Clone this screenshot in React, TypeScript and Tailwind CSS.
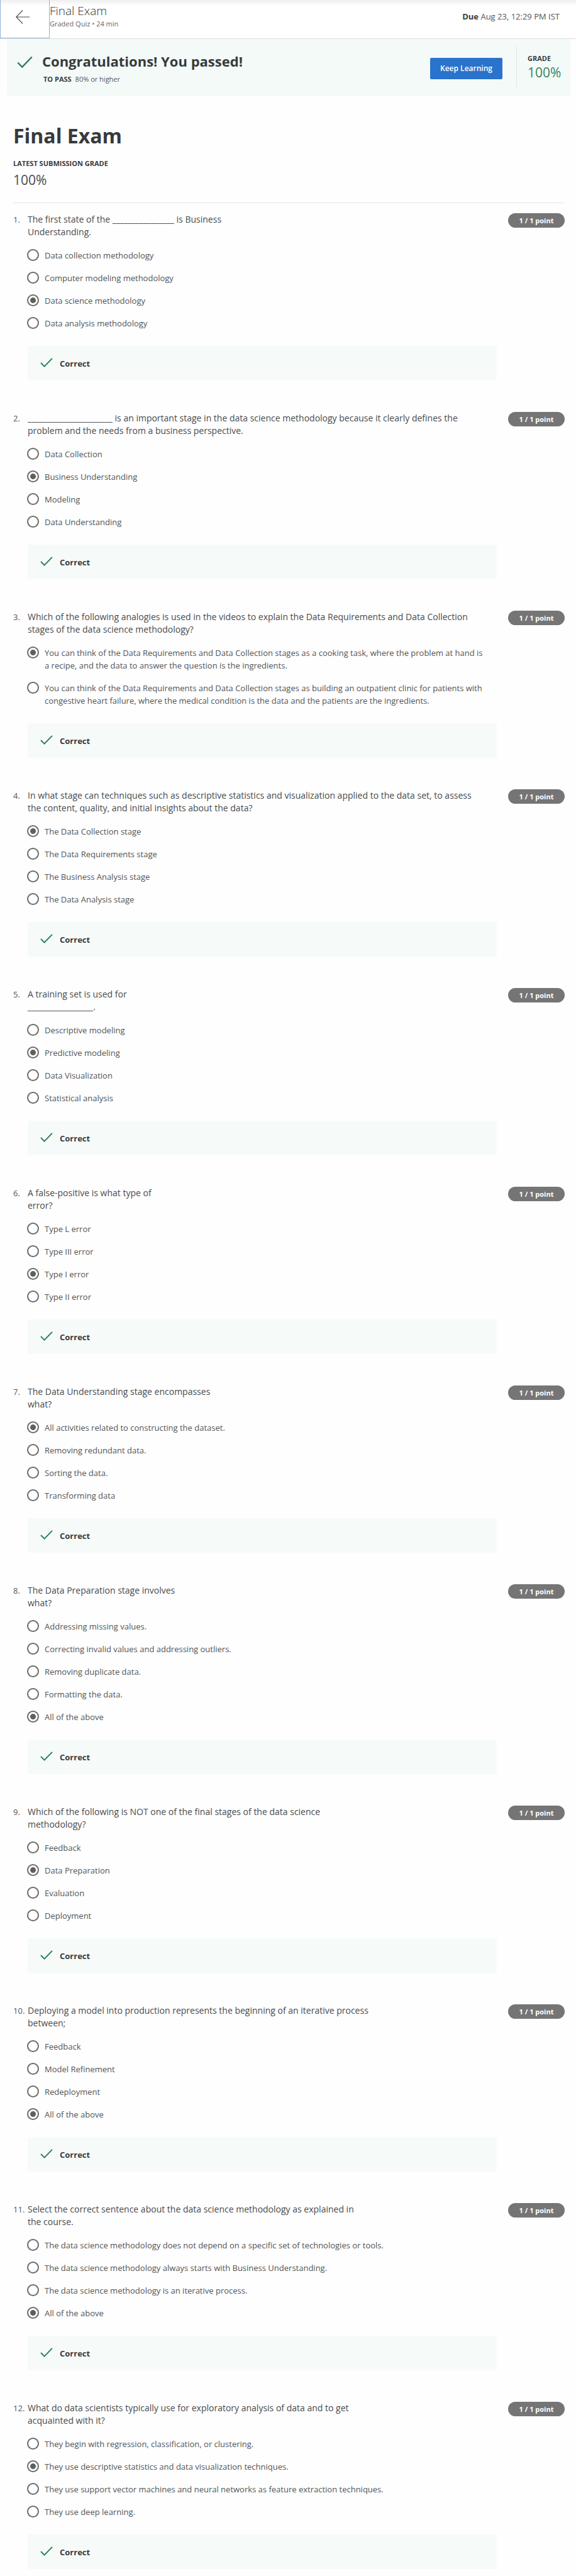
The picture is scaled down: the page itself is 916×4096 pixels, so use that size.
interface Question {
  prompt: string;
  options: string[];
  selected: number;
}

const questions: Question[] = [
  {
    prompt: 'The first state of the ________________ is Business\nUnderstanding.',
    options: [
      'Data collection methodology',
      'Computer modeling methodology',
      'Data science methodology',
      'Data analysis methodology',
    ],
    selected: 2,
  },
  {
    prompt:
      '______________________ is an important stage in the data science methodology because it clearly defines the\nproblem and the needs from a business perspective.',
    options: ['Data Collection', 'Business Understanding', 'Modeling', 'Data Understanding'],
    selected: 1,
  },
  {
    prompt:
      'Which of the following analogies is used in the videos to explain the Data Requirements and Data Collection\nstages of the data science methodology?',
    options: [
      'You can think of the Data Requirements and Data Collection stages as a cooking task, where the problem at hand is a recipe, and the data to answer the question is the ingredients.',
      'You can think of the Data Requirements and Data Collection stages as building an outpatient clinic for patients with congestive heart failure, where the medical condition is the data and the patients are the ingredients.',
    ],
    selected: 0,
  },
  {
    prompt:
      'In what stage can techniques such as descriptive statistics and visualization applied to the data set, to assess\nthe content, quality, and initial insights about the data?',
    options: [
      'The Data Collection stage',
      'The Data Requirements stage',
      'The Business Analysis stage',
      'The Data Analysis stage',
    ],
    selected: 0,
  },
  {
    prompt: 'A training set is used for\n_________________.',
    options: ['Descriptive modeling', 'Predictive modeling', 'Data Visualization', 'Statistical analysis'],
    selected: 1,
  },
  {
    prompt: 'A false-positive is what type of\nerror?',
    options: ['Type L error', 'Type III error', 'Type I error', 'Type II error'],
    selected: 2,
  },
  {
    prompt: 'The Data Understanding stage encompasses\nwhat?',
    options: [
      'All activities related to constructing the dataset.',
      'Removing redundant data.',
      'Sorting the data.',
      'Transforming data',
    ],
    selected: 0,
  },
  {
    prompt: 'The Data Preparation stage involves\nwhat?',
    options: [
      'Addressing missing values.',
      'Correcting invalid values and addressing outliers.',
      'Removing duplicate data.',
      'Formatting the data.',
      'All of the above',
    ],
    selected: 4,
  },
  {
    prompt: 'Which of the following is NOT one of the final stages of the data science\nmethodology?',
    options: ['Feedback', 'Data Preparation', 'Evaluation', 'Deployment'],
    selected: 1,
  },
  {
    prompt: 'Deploying a model into production represents the beginning of an iterative process\nbetween;',
    options: ['Feedback', 'Model Refinement', 'Redeployment', 'All of the above'],
    selected: 3,
  },
  {
    prompt: 'Select the correct sentence about the data science methodology as explained in\nthe course.',
    options: [
      'The data science methodology does not depend on a specific set of technologies or tools.',
      'The data science methodology always starts with Business Understanding.',
      'The data science methodology is an iterative process.',
      'All of the above',
    ],
    selected: 3,
  },
  {
    prompt: 'What do data scientists typically use for exploratory analysis of data and to get\nacquainted with it?',
    options: [
      'They begin with regression, classification, or clustering.',
      'They use descriptive statistics and data visualization techniques.',
      'They use support vector machines and neural networks as feature extraction techniques.',
      'They use deep learning.',
    ],
    selected: 1,
  },
];

function CheckMark({ className }: { className: string }) {
  return (
    <svg viewBox="0 0 20 18" fill="none" aria-hidden="true" className={className}>
      <path d="M1 9 L6.6 14.6 L19 1.8" stroke="#2a7d55" strokeWidth="1.9" />
    </svg>
  );
}

function Header() {
  return (
    <header className="flex h-[62px] border-b border-[#dcdfdf] bg-[linear-gradient(to_bottom,#efefef,#ffffff_9px)]">
      <button
        type="button"
        aria-label="Back"
        className="flex h-[61px] w-[79px] items-center border border-t-0 border-[#8db3d6] bg-transparent pb-[7px] pl-6"
      >
        <svg viewBox="0 0 22 22" fill="none" stroke="#4a4a4a" strokeWidth="1.1" className="h-[22px] w-[22px]">
          <path d="M22 11 H1 M11 0.5 L0.8 11 L11 21.5" />
        </svg>
      </button>
      <div className="flex-1 pt-[5px]">
        <p className="text-[19px] leading-[25px] font-light text-[#333]">Final Exam</p>
        <p className="text-[11px] leading-4 text-[#666]">Graded Quiz • 24 min</p>
      </div>
      <p className="pt-4 pr-[26px] text-[13px] leading-5 text-[#555]">
        <strong className="font-bold text-[#373a3c]">Due</strong> Aug 23, 12:29 PM IST
      </p>
    </header>
  );
}

function ResultBanner() {
  return (
    <section className="mr-[9px] ml-[11px] flex h-[90px] items-start bg-[#f3faf8] pl-4">
      <CheckMark className="mt-[26px] h-[23px] w-[25px]" />
      <div className="ml-[15px] flex-1 pt-5">
        <h2 className="text-[22px] leading-[30px] font-bold text-[#373a3c]">Congratulations! You passed!</h2>
        <p className="ml-[2px] pt-[6px] text-[11px] leading-4 text-[#555]">
          <strong className="mr-[6px] font-bold text-[#373a3c]">TO PASS</strong>
          80% or higher
        </p>
      </div>
      <button
        type="button"
        className="mt-[30px] h-[34px] w-[115px] rounded-[2px] bg-[#2a73cc] text-[12px] font-semibold text-white"
      >
        Keep Learning
      </button>
      <div className="mt-3 ml-[22px] h-16 w-[86px] border-l border-[#e1e6e5] pt-[11px] pl-[17px]">
        <p className="text-[11px] leading-4 font-bold text-[#373a3c]">GRADE</p>
        <p className="text-[21px] leading-7 text-[#38855c]">100%</p>
      </div>
    </section>
  );
}

function QuestionItem({ question, index }: { question: Question; index: number }) {
  return (
    <li className="flex items-start pb-[50px] last:pb-0">
      <span className="w-[23px] shrink-0 text-[13px] leading-5 text-[#555]">{index + 1}.</span>
      <fieldset className="min-w-0 flex-1">
        <legend className="text-[14px] leading-5 whitespace-pre-line text-[#484b4d]">{question.prompt}</legend>
        <div className="mt-[17px] flex flex-col gap-4">
          {question.options.map((option, i) => (
            <label key={option} className="flex items-start pr-4 text-[13px] leading-5 text-[#525557]">
              <input
                type="radio"
                name={`question-${index + 1}`}
                defaultChecked={i === question.selected}
                className="mr-[9px] -ml-px h-[19px] w-[19px] shrink-0 appearance-none rounded-full border-2 border-[#6c6c6c] bg-white checked:bg-[radial-gradient(circle,#5f5f5f_4px,#ffffff_5px)]"
              />
              <span>{option}</span>
            </label>
          ))}
        </div>
        <div className="mt-[26px] flex h-[55px] items-center bg-[#f6fbfa] pl-5">
          <CheckMark className="mr-[11px] mb-[2px] h-[18px] w-5" />
          <strong className="text-[13px] leading-5 font-bold text-[#373a3c]">Correct</strong>
        </div>
      </fieldset>
      <span className="ml-[18px] flex h-[23px] w-[90px] shrink-0 items-center justify-center rounded-full bg-[#757575] text-[11px] leading-4 font-bold text-white">
        1 / 1 point
      </span>
    </li>
  );
}

export default function App() {
  return (
    <div className="min-h-screen bg-[#fefefe] font-['Open_Sans','Noto_Sans',sans-serif]">
      <Header />
      <ResultBanner />
      <main className="pt-[42px] pr-[18px] pb-[10px] pl-[21px]">
        <h1 className="text-[32px] leading-[44px] font-bold text-[#373a3c]">Final Exam</h1>
        <p className="mt-[14px] text-[11px] leading-4 font-bold text-[#373a3c]">LATEST SUBMISSION GRADE</p>
        <p className="mt-1 text-[21px] leading-7 text-[#484b4d]">100%</p>
        <hr className="mt-[22px] border-[#e8e8e8]" />
        <ol className="mt-4">
          {questions.map((question, i) => (
            <QuestionItem key={question.prompt} question={question} index={i} />
          ))}
        </ol>
      </main>
    </div>
  );
}
